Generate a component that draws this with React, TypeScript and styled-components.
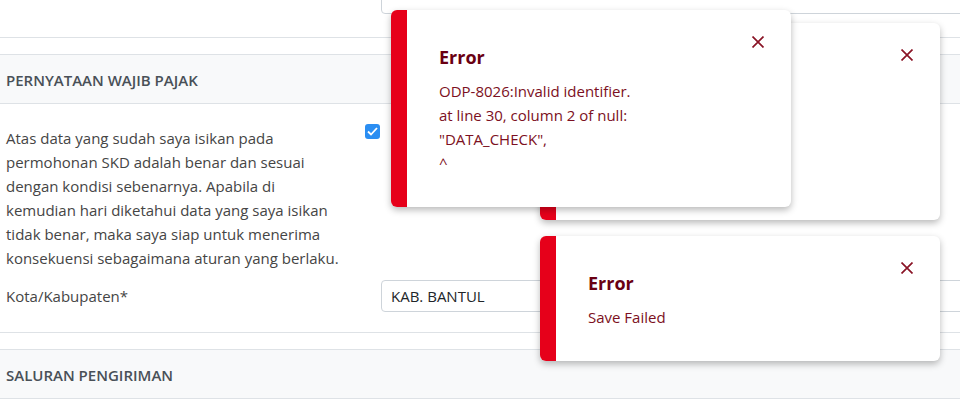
import React from "react";
import styled, { createGlobalStyle } from "styled-components";

const Global = createGlobalStyle`
  html, body { margin: 0; padding: 0; background: #fff; }
  body { font-family: "Open Sans", "Noto Sans", sans-serif; overflow: hidden; }
  #root { width: 960px; height: 402px; overflow: hidden; position: relative; }
`;

const Page = styled.div`
  width: 1000px;
  margin-top: -18px;
  color: #495057;
  font-size: 15px;
`;

const Block = styled.div<{ $top?: number; $bottom?: number }>`
  border-bottom: 1px solid #dee2e6;
  padding: ${(p) => p.$top ?? 0}px 0 ${(p) => p.$bottom ?? 0}px 6px;
  display: flex;
  flex-direction: column;
  gap: 10px;
`;

const SectionHeader = styled.div`
  margin-top: 16px;
  background: #f8f9fa;
  border-top: 1px solid #dee2e6;
  border-bottom: 1px solid #dee2e6;
  display: flex;
  align-items: center;
  padding-left: 6px;
  padding-top: 1px;
  box-sizing: border-box;
  height: 50px;
  font-size: 15px;
  font-weight: 600;
  color: #495057;
`;

const Row = styled.div<{ $align?: string }>`
  display: grid;
  grid-template-columns: 359px 16px 1fr;
  align-items: ${(p) => p.$align ?? "center"};
`;

const Statement = styled.p`
  margin: 0;
  line-height: 24px;
  color: #454545;
`;

const Label = styled.div`
  line-height: 24px;
  color: #454545;
  grid-column: 1 / 3;
`;

const Field = styled.div`
  height: 30px;
  border: 1px solid #ced4da;
  border-radius: 4px;
  display: flex;
  align-items: center;
  padding-left: 9px;
  color: #212529;
  font-size: 15px;
  background: #fff;
`;

const Check = styled.span`
  width: 15px;
  height: 15px;
  border-radius: 3px;
  background: #2b8ef2;
  display: inline-flex;
  align-items: center;
  justify-content: center;
  margin-top: -2px;
`;

const ToastBox = styled.div<{ $x: number; $y: number }>`
  position: absolute;
  left: ${(p) => p.$x}px;
  top: ${(p) => p.$y}px;
  width: 400px;
  display: flex;
  background: #fff;
  border-radius: 6px;
  overflow: hidden;
  box-shadow: 0 3px 7px rgba(0, 0, 0, 0.28);
`;

const Strip = styled.div`
  width: 16px;
  background: #e6001a;
  flex: none;
`;

const ToastBody = styled.div`
  padding: 35px 40px 32px 32px;
  position: relative;
  flex: 1;
`;

const ToastTitle = styled.div`
  font-size: 18px;
  font-weight: 700;
  line-height: 24px;
  color: #6a0012;
  margin-bottom: 10px;
`;

const ToastText = styled.div`
  font-size: 15px;
  line-height: 24px;
  color: #7c1022;
`;

const Close = styled.button`
  position: absolute;
  top: 26px;
  right: 27px;
  width: 12px;
  height: 12px;
  padding: 0;
  border: 0;
  background: none;
  display: flex;
`;

const XIcon = () => (
  <svg width="12" height="12" viewBox="0 0 12 12">
    <path d="M0.5 0.5L11.5 11.5M11.5 0.5L0.5 11.5" stroke="#8a1426" strokeWidth="1.7" />
  </svg>
);

const Toast = ({ x, y, lines }: { x: number; y: number; lines: string[] }) => (
  <ToastBox $x={x} $y={y}>
    <Strip />
    <ToastBody>
      <ToastTitle>Error</ToastTitle>
      <ToastText>
        {lines.map((l, i) => (
          <div key={i}>{l}</div>
        ))}
      </ToastText>
      <Close aria-label="close">
        <XIcon />
      </Close>
    </ToastBody>
  </ToastBox>
);

const detail = [
  "ODP-8026:Invalid identifier.",
  "at line 30, column 2 of null:",
  '"DATA_CHECK",',
  "^",
];

export default function App() {
  return (
    <>
      <Global />
      <Page>
        <Block $top={0} $bottom={23}>
          <Row>
            <span />
            <span />
            <Field />
          </Row>
        </Block>
        <SectionHeader>PERNYATAAN WAJIB PAJAK</SectionHeader>
        <Block $top={22} $bottom={20}>
          <Row $align="start">
            <Statement>
              Atas data yang sudah saya isikan pada
              <br />
              permohonan SKD adalah benar dan sesuai
              <br />
              dengan kondisi sebenarnya. Apabila di
              <br />
              kemudian hari diketahui data yang saya isikan
              <br />
              tidak benar, maka saya siap untuk menerima
              <br />
              konsekuensi sebagaimana aturan yang berlaku.
            </Statement>
            <Check>
              <svg width="11" height="9" viewBox="0 0 11 9">
                <path d="M1 4.5L4 7.5L10 1" fill="none" stroke="#fff" strokeWidth="1.8" />
              </svg>
            </Check>
          </Row>
          <Row>
            <Label>Kota/Kabupaten*</Label>
            <Field>KAB. BANTUL</Field>
          </Row>
        </Block>
        <SectionHeader>SALURAN PENGIRIMAN</SectionHeader>
      </Page>
      <Toast x={540} y={236} lines={["Save Failed"]} />
      <Toast x={540} y={23} lines={detail} />
      <Toast x={391} y={10} lines={detail} />
    </>
  );
}
